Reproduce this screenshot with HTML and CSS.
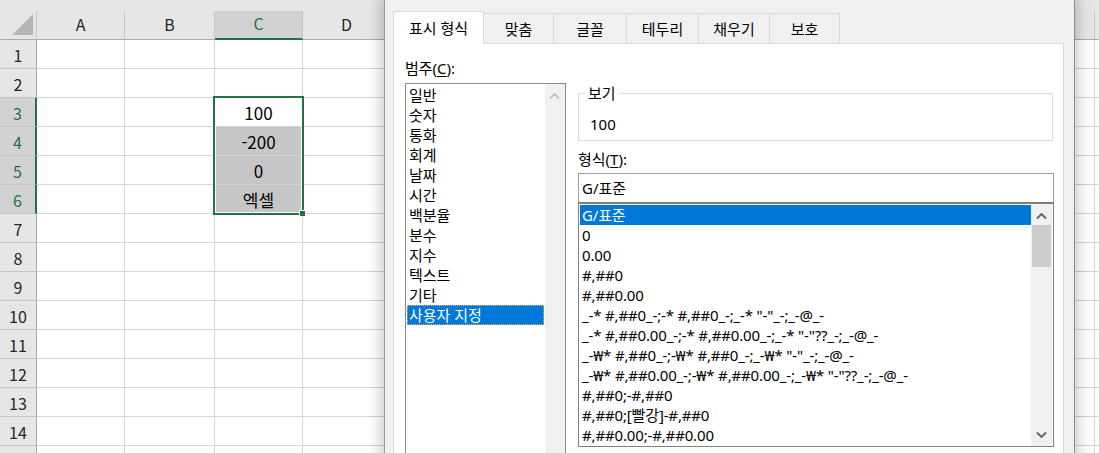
FILE: index.html
```html
<!DOCTYPE html>
<html lang="ko">
<head>
<meta charset="utf-8">
<title>셀 서식</title>
<link rel="stylesheet" href="styles.css">
</head>
<body>
<div class="sheet">
  <div class="band"></div>
  <div class="grid">
    <div class="corner"><svg width="36" height="28" viewBox="0 0 36 28"><polygon points="33,3 33,24 12,24" fill="#b6b6b6"/></svg></div>
    <div class="ch">A</div><div class="ch">B</div><div class="ch on">C</div><div class="ch">D</div><div class="ch">E</div><div class="ch">F</div><div class="ch">G</div><div class="ch">H</div><div class="ch">I</div><div class="ch">J</div><div class="ch">K</div><div class="ch">L</div><div class="ch">M</div>

    <div class="rh">1</div><span></span><span></span><span></span><span></span><span></span><span></span><span></span><span></span><span></span><span></span><span></span><span></span><span></span>
    <div class="rh">2</div><span></span><span></span><span></span><span></span><span></span><span></span><span></span><span></span><span></span><span></span><span></span><span></span><span></span>
    <div class="rh on">3</div><span></span><span></span><span class="cv">100</span><span></span><span></span><span></span><span></span><span></span><span></span><span></span><span></span><span></span><span></span>
    <div class="rh on">4</div><span></span><span></span><span class="cv g">-200</span><span></span><span></span><span></span><span></span><span></span><span></span><span></span><span></span><span></span><span></span>
    <div class="rh on">5</div><span></span><span></span><span class="cv g">0</span><span></span><span></span><span></span><span></span><span></span><span></span><span></span><span></span><span></span><span></span>
    <div class="rh on">6</div><span></span><span></span><span class="cv g">엑셀</span><span></span><span></span><span></span><span></span><span></span><span></span><span></span><span></span><span></span><span></span>
    <div class="rh">7</div><span></span><span></span><span></span><span></span><span></span><span></span><span></span><span></span><span></span><span></span><span></span><span></span><span></span>
    <div class="rh">8</div><span></span><span></span><span></span><span></span><span></span><span></span><span></span><span></span><span></span><span></span><span></span><span></span><span></span>
    <div class="rh">9</div><span></span><span></span><span></span><span></span><span></span><span></span><span></span><span></span><span></span><span></span><span></span><span></span><span></span>
    <div class="rh">10</div><span></span><span></span><span></span><span></span><span></span><span></span><span></span><span></span><span></span><span></span><span></span><span></span><span></span>
    <div class="rh">11</div><span></span><span></span><span></span><span></span><span></span><span></span><span></span><span></span><span></span><span></span><span></span><span></span><span></span>
    <div class="rh">12</div><span></span><span></span><span></span><span></span><span></span><span></span><span></span><span></span><span></span><span></span><span></span><span></span><span></span>
    <div class="rh">13</div><span></span><span></span><span></span><span></span><span></span><span></span><span></span><span></span><span></span><span></span><span></span><span></span><span></span>
    <div class="rh">14</div><span></span><span></span><span></span><span></span><span></span><span></span><span></span><span></span><span></span><span></span><span></span><span></span><span></span>
    <div class="rh">15</div><span></span><span></span><span></span><span></span><span></span><span></span><span></span><span></span><span></span><span></span><span></span><span></span><span></span>
  </div>
  <div class="selbox"></div>
  <div class="handle"></div>
</div>

<div class="dialog">
  <div class="tabs">
    <div class="tab active">표시 형식</div>
    <div class="tab w70">맞춤</div>
    <div class="tab w73">글꼴</div>
    <div class="tab w72">테두리</div>
    <div class="tab w71">채우기</div>
    <div class="tab w70">보호</div>
  </div>
  <div class="panel">
    <div class="col-left">
      <div class="label">범주(<u>C</u>):</div>
      <div class="catlist">
        <div class="items">
          <div class="item">일반</div>
          <div class="item">숫자</div>
          <div class="item">통화</div>
          <div class="item">회계</div>
          <div class="item">날짜</div>
          <div class="item">시간</div>
          <div class="item">백분율</div>
          <div class="item">분수</div>
          <div class="item">지수</div>
          <div class="item">텍스트</div>
          <div class="item">기타</div>
          <div class="item sel">사용자 지정</div>
        </div>
        <div class="vscroll cat">
          <div class="arrow"><svg width="20" height="21" viewBox="0 0 20 21"><polyline points="5,14.5 9.5,10 14,14.5" fill="none" stroke="#c2c2c2" stroke-width="1.8"/></svg></div>
        </div>
      </div>
    </div>
    <div class="col-right">
      <fieldset class="preview">
        <legend>보기</legend>
        <div class="sample">100</div>
      </fieldset>
      <div class="label fmt-label">형식(<u>T</u>):</div>
      <div class="input">G/표준</div>
      <div class="fmtlist">
        <div class="items">
          <div class="fmt sel">G/표준</div>
          <div class="fmt">0</div>
          <div class="fmt">0.00</div>
          <div class="fmt">#,##0</div>
          <div class="fmt">#,##0.00</div>
          <div class="fmt">_-* #,##0_-;-* #,##0_-;_-* "-"_-;_-@_-</div>
          <div class="fmt">_-* #,##0.00_-;-* #,##0.00_-;_-* "-"??_-;_-@_-</div>
          <div class="fmt">_-₩* #,##0_-;-₩* #,##0_-;_-₩* "-"_-;_-@_-</div>
          <div class="fmt">_-₩* #,##0.00_-;-₩* #,##0.00_-;_-₩* "-"??_-;_-@_-</div>
          <div class="fmt">#,##0;-#,##0</div>
          <div class="fmt">#,##0;[빨강]-#,##0</div>
          <div class="fmt">#,##0.00;-#,##0.00</div>
        </div>
        <div class="vscroll">
          <div class="arrow"><svg width="21" height="21" viewBox="0 0 21 21"><polyline points="6,14.5 10.5,10 15,14.5" fill="none" stroke="#606060" stroke-width="1.8"/></svg></div>
          <div class="thumb"></div>
          <div class="track"></div>
          <div class="arrow"><svg width="21" height="21" viewBox="0 0 21 21"><polyline points="6,7.5 10.5,12 15,7.5" fill="none" stroke="#606060" stroke-width="1.8"/></svg></div>
        </div>
      </div>
    </div>
  </div>
</div>
</body>
</html>
```

FILE: styles.css
```css
* { box-sizing: border-box; }
html, body { margin: 0; padding: 0; }
body {
  width: 1099px;
  height: 453px;
  overflow: hidden;
  position: relative;
  background: #fff;
  font-family: "Noto Sans CJK KR", "Noto Sans", sans-serif;
  color: #000;
}

/* ---------- spreadsheet ---------- */
.sheet { position: relative; width: 1099px; height: 453px; overflow: hidden; }
.band { height: 11px; background: #e6e6e6; }
.grid {
  display: grid;
  grid-template-columns: 37px 88px 90px repeat(11, 88px);
  grid-auto-rows: 29px;
}
.grid > * {
  border-right: 1px solid #d4d4d4;
  border-bottom: 1px solid #d4d4d4;
  display: flex;
  align-items: center;
  justify-content: center;
}
.corner {
  background: #e6e6e6;
  border-right-color: #c6c6c6 !important;
  border-bottom-color: #ababab !important;
  align-items: flex-start !important;
  justify-content: flex-start !important;
}
.ch {
  background: #e6e6e6;
  border-right-color: #c6c6c6 !important;
  border-bottom-color: #ababab !important;
  font-size: 16px;
  color: #262626;
  padding-bottom: 3px;
}
.ch.on {
  background: #d2d2d2;
  color: #217346;
  border-bottom: 2px solid #217346 !important;
}
.rh {
  background: #e6e6e6;
  border-right-color: #a8a8a8 !important;
  border-bottom-color: #c6c6c6 !important;
  font-size: 16px;
  color: #262626;
  padding-top: 2px;
}
.rh.on {
  background: #d2d2d2;
  color: #217346;
  border-right: 2px solid #217346 !important;
}
.cv { font-size: 17px; padding-top: 0; }
.cv.g { background: #c6c6c6; }

.selbox {
  position: absolute;
  left: 213px;
  top: 96px;
  width: 91px;
  height: 119px;
  border: 2px solid #217346;
  box-shadow: inset 0 0 0 1px #fff;
  pointer-events: none;
}
.handle {
  position: absolute;
  left: 299px;
  top: 210px;
  width: 7px;
  height: 7px;
  background: #217346;
  border: 1px solid #fff;
}

/* ---------- dialog ---------- */
.dialog {
  position: absolute;
  left: 384px;
  top: 0;
  width: 691px;
  height: 480px;
  background: #f0f0f0;
  border-left: 1px solid #9c9c9c;
  border-right: 1px solid #8c8c8c;
  box-shadow: 0 0 14px 3px rgba(0, 0, 0, 0.22);
  padding: 11px 0 0 8px;
  font-family: "Noto Sans", "Noto Sans CJK KR", sans-serif;
  font-size: 15px;
  color: #000;
}
.tabs {
  display: flex;
  align-items: flex-end;
  height: 32px;
  position: relative;
  z-index: 1;
}
.tab {
  height: 30px;
  border-top: 1px solid #d9d9d9;
  border-right: 1px solid #d9d9d9;
  text-align: center;
  line-height: 28px;
  padding-top: 1px;
  overflow: hidden;
}
.tab.active {
  width: 91px;
  height: 33px;
  margin-bottom: -1px;
  background: #fff;
  border-left: 1px solid #d9d9d9;
  line-height: 30px;
  padding-top: 1px;
}
.w70 { width: 70px; }
.w71 { width: 71px; }
.w72 { width: 72px; }
.w73 { width: 73px; }

.panel {
  width: 671px;
  height: 440px;
  border: 1px solid #d9d9d9;
  background: #fff;
  display: flex;
  gap: 12px;
  padding: 14px 0 0 11px;
}
.col-left { width: 161px; }
.col-right { width: 476px; padding-top: 25px; }
.label { height: 20px; line-height: 20px; }
.label u { text-underline-offset: 2px; }

.catlist {
  margin-top: 5px;
  height: 400px;
  border: 1px solid #8c8c8c;
  display: flex;
}
.items { flex: 1; padding: 1px; overflow: hidden; }
.item {
  height: 20px;
  line-height: 20px;
  padding-left: 2px;
  white-space: nowrap;
}
.item.sel {
  background: #0078d7;
  color: #fff;
  outline: 1px dotted #f2b54a;
  outline-offset: -1px;
}
.vscroll {
  width: 21px;
  background: #f0f0f0;
  display: flex;
  flex-direction: column;
}
.vscroll.cat { width: 20px; }
.arrow { height: 21px; display: flex; }
.thumb { height: 42px; background: #cdcdcd; margin: 0 1px; }
.track { flex: 1; }

.preview {
  margin: 0;
  width: 475px;
  min-width: 0;
  border: 1px solid #dcdcdc;
  padding: 0 6px 6px;
}
.preview legend {
  padding: 0 3px;
  line-height: 20px;
  height: 20px;
}
.sample {
  margin-top: 11px;
  padding-left: 5px;
  height: 20px;
  line-height: 20px;
}
.fmt-label { margin-top: 8px; }
.input {
  margin-top: 4px;
  height: 30px;
  border: 1px solid #a0a0a0;
  border-bottom-color: #7a7a7a;
  line-height: 28px;
  padding-left: 3px;
}
.fmtlist {
  height: 244px;
  border: 1px solid #828282;
  display: flex;
  padding-right: 1px;
}
.fmtlist .items { padding: 1px 0 1px 1px; }
.fmt {
  height: 20px;
  line-height: 20px;
  padding-left: 2px;
  white-space: nowrap;
  overflow: hidden;
  letter-spacing: -0.15px;
}
.fmt.sel { background: #0078d7; color: #fff; }
```
